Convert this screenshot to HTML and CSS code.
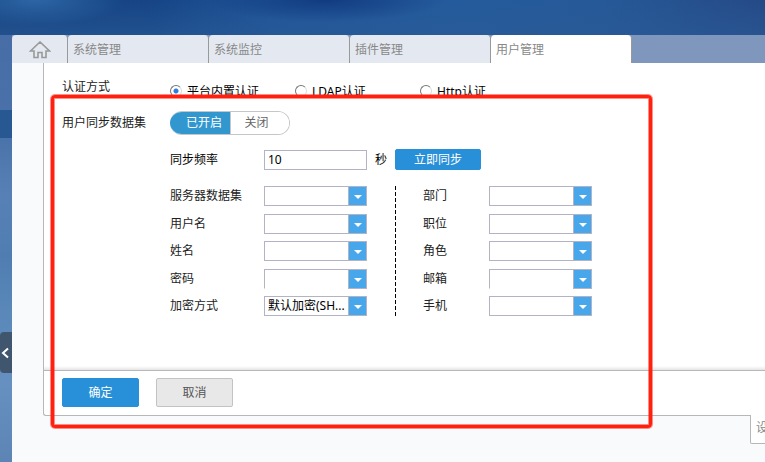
FILE: index.html
```html
<!DOCTYPE html>
<html lang="zh-CN">
<head>
    <meta charset="UTF-8">
    <meta name="viewport" content="width=device-width, initial-scale=1.0">
    <title>用户管理</title>
    <link rel="stylesheet" href="styles.css">
</head>
<body>
    <header class="banner"></header>
    <div class="layout">
        <aside class="sidebar">
            <div class="sidebar-active"></div>
            <button class="collapse" type="button" aria-label="收起">
                <svg width="8" height="12" viewBox="0 0 8 12"><path d="M7 1.5L2 6l5 4.5" fill="none" stroke="#fff" stroke-width="2"/></svg>
            </button>
        </aside>
        <main class="content">
            <nav class="tabs">
                <a href="#" class="tab home" aria-label="首页">
                    <svg width="22" height="18" viewBox="0 0 22 18" fill="none" stroke="#999" stroke-width="1.6"><path d="M1.500 10L11 1l9.500 9H17v6.500h-4V11.500H9v5H5V10z"/></svg>
                </a>
                <a href="#" class="tab">系统管理</a>
                <a href="#" class="tab">系统监控</a>
                <a href="#" class="tab">插件管理</a>
                <a href="#" class="tab active">用户管理</a>
            </nav>
            <form class="panel">
                <div class="panel-body">
                    <div class="row auth">
                        <span class="title">认证方式</span>
                        <div class="radios">
                            <label><input type="radio" name="auth" checked>平台内置认证</label>
                            <label><input type="radio" name="auth">LDAP认证</label>
                            <label><input type="radio" name="auth">Http认证</label>
                        </div>
                    </div>
                    <div class="row sync">
                        <span class="title">用户同步数据集</span>
                        <div class="switch">
                            <button type="button" class="on">已开启</button>
                            <button type="button" class="off">关闭</button>
                        </div>
                    </div>
                    <div class="settings">
                        <div class="frequency">
                            <label class="name" for="freq">同步频率</label>
                            <input class="text" id="freq" type="text" value="10">
                            <span class="unit">秒</span>
                            <button type="button" class="btn primary small">立即同步</button>
                        </div>
                        <div class="fields">
                            <div class="column">
                                <div class="field"><label class="name" for="dataset">服务器数据集</label><span class="combo"><select id="dataset"><option></option></select></span></div>
                                <div class="field"><label class="name" for="username">用户名</label><span class="combo"><select id="username"><option></option></select></span></div>
                                <div class="field"><label class="name" for="realname">姓名</label><span class="combo"><select id="realname"><option></option></select></span></div>
                                <div class="field"><label class="name" for="password">密码</label><span class="combo open"><select id="password"><option></option></select></span></div>
                                <div class="field"><label class="name" for="encrypt">加密方式</label><span class="combo"><select id="encrypt"><option>默认加密(SH...</option></select></span></div>
                            </div>
                            <div class="column right">
                                <div class="field"><label class="name" for="dept">部门</label><span class="combo"><select id="dept"><option></option></select></span></div>
                                <div class="field"><label class="name" for="post">职位</label><span class="combo"><select id="post"><option></option></select></span></div>
                                <div class="field"><label class="name" for="role">角色</label><span class="combo"><select id="role"><option></option></select></span></div>
                                <div class="field"><label class="name" for="mail">邮箱</label><span class="combo open"><select id="mail"><option></option></select></span></div>
                                <div class="field"><label class="name" for="mobile">手机</label><span class="combo"><select id="mobile"><option></option></select></span></div>
                            </div>
                        </div>
                    </div>
                </div>
                <div class="panel-footer">
                    <button type="button" class="btn primary">确定</button>
                    <button type="button" class="btn">取消</button>
                </div>
            </form>
            <div class="bottom"><a href="#" class="corner">设</a></div>
        </main>
    </div>
    <div class="highlight"></div>
</body>
</html>
```
FILE: styles.css
```css
*, *::before {
    box-sizing: border-box;
}
body {
    margin: 0;
    min-height: 100vh;
    display: flex;
    flex-direction: column;
    position: relative;
    overflow: hidden;
    background-color: #f8fafc;
    color: #222;
    font: 12px/16px "Noto Sans", "Noto Sans CJK SC", sans-serif;
}
button, input, select {
    font: inherit;
    margin: 0;
}
a {
    color: #888;
    text-decoration: none;
}
.banner {
    height: 35px;
    background:
        radial-gradient(ellipse 90px 26px at 35px 0, #2d66a5, rgba(45, 102, 165, 0)),
        radial-gradient(ellipse 120px 22px at 325px 0, #123b80, rgba(18, 59, 128, 0)),
        linear-gradient(to bottom, rgba(42, 90, 150, 0), rgba(42, 90, 150, 0.6)),
        linear-gradient(to right, #164382 0, #164485 150px, #1f5598 270px, #245b9c 450px, #265998 600px, #254a86 100%);
}
.layout {
    flex: 1;
    display: flex;
}
.sidebar {
    width: 12px;
    padding-top: 75px;
    background: linear-gradient(#486da6, #4a72aa 100px, #5781b6 160px, #4f7db2 220px, #5b8aba 290px, #6690bf 350px, #5c85b5);
}
.sidebar-active {
    height: 28px;
    background-color: #285892;
}
.collapse {
    display: flex;
    align-items: center;
    width: 12px;
    height: 41px;
    margin-top: 194px;
    padding: 0 0 0 1px;
    border: 0;
    border-radius: 4px 0 0 4px;
    background-color: #40566f;
}
.content {
    flex: 1;
    min-width: 0;
}
.tabs {
    display: flex;
    height: 28px;
    background-color: #7f97bc;
}
.tab {
    width: 141px;
    padding: 7px 5px;
    border-right: 1px solid #999;
    border-radius: 4px 4px 0 0;
    background-color: #e4e9f1;
}
.tab.home {
    width: 56px;
    padding: 6px 17px;
}
.tab.active {
    background-color: #fff;
}
.panel {
    margin-left: 31px;
    border: 1px solid #b7b7b7;
    border-width: 0 0 1px 1px;
    border-radius: 0 0 0 3px;
    background-color: #fff;
}
.panel-body {
    height: 307px;
    padding: 16px 18px 0;
    background: linear-gradient(rgba(0, 0, 0, 0), rgba(0, 0, 0, 0.1)) bottom / 100% 4px no-repeat;
}
.row {
    display: flex;
}
.title {
    width: 108px;
}
.auth {
    height: 19px;
}
.radios {
    display: flex;
    height: 19px;
    padding-top: 5px;
    overflow: hidden;
    color: #000;
}
.radios label {
    display: flex;
    width: 125px;
}
.radios input {
    appearance: none;
    width: 12px;
    height: 12px;
    margin: 1px 5px 0 0;
    border: 1px solid;
    border-color: #777 #ddd #eee #777;
    border-radius: 50%;
}
.radios input:checked {
    background: radial-gradient(#2b7fdc 2px, #fff 3px);
}
.sync {
    align-items: center;
    margin-top: 13px;
}
.switch {
    display: flex;
    width: 120px;
    height: 24px;
    border: 1px solid #c4c6ca;
    border-left: 0;
    border-radius: 12px;
    overflow: hidden;
}
.switch button {
    border: 0;
    padding: 0;
}
.switch .on {
    width: 60px;
    margin: -1px 0;
    padding-left: 8px;
    color: #fff;
    background-color: #3297cf;
}
.switch .off {
    flex: 1;
    padding-right: 7px;
    border-left: 1px solid #c4c6ca;
    color: #666;
    background-color: #fff;
}
.settings {
    margin-left: 108px;
}
.frequency {
    display: flex;
    align-items: center;
    height: 21px;
    margin-top: 14px;
    color: #000;
}
.name {
    width: 94px;
}
.text {
    width: 103px;
    height: 20px;
    padding: 0 3px;
    border: 1px solid #b2b4c6;
}
.unit {
    width: 20px;
    margin-left: 8px;
}
.btn {
    width: 77px;
    height: 29px;
    padding: 0;
    border: 1px solid #c3c3c3;
    border-radius: 2px;
    color: #555;
    background-color: #e8e8e8;
}
.btn.primary {
    border-color: #2890d8;
    color: #fff;
    background-color: #2890d8;
}
.btn.small {
    width: 86px;
    height: 21px;
}
.fields {
    display: flex;
    margin-top: 16px;
}
.column {
    display: flex;
    flex-direction: column;
    justify-content: space-between;
    width: 225px;
    height: 130px;
}
.column.right {
    padding-left: 28px;
    /* thin dashed divider */
    background: repeating-linear-gradient(#000 0 4px, #fff 4px 6px) left / 1px 100% no-repeat;
}
.right .name {
    width: 66px;
}
.field {
    display: flex;
    align-items: center;
    height: 20px;
}
.combo {
    position: relative;
    width: 103px;
    height: 20px;
}
.combo select {
    appearance: none;
    display: block;
    width: 103px;
    height: 20px;
    padding: 0 18px 0 3px;
    border: 1px solid #b2b4c6;
    border-radius: 0;
    color: #000;
    background-color: #fff;
}
.combo.open select {
    border-bottom-color: #fff;
}
.combo::before {
    content: "";
    position: absolute;
    top: 0;
    right: 0;
    width: 19px;
    height: 20px;
    border: 1px solid #b2b4c6;
    background-color: #48a7ea;
    pointer-events: none;
}
.combo::after {
    content: "";
    position: absolute;
    top: 9px;
    right: 5px;
    border: 4px solid transparent;
    border-top-color: #fff;
    border-bottom: 0;
    pointer-events: none;
}
.panel-footer {
    display: flex;
    gap: 17px;
    padding: 7px 18px 8px;
    border-top: 1px solid #b7b7b7;
}
.bottom {
    display: flex;
    justify-content: flex-end;
}
.corner {
    width: 15px;
    height: 29px;
    margin-top: -1px;
    padding: 5px 0 0 5px;
    overflow: hidden;
    border: 1px solid #b7b7b7;
    border-width: 0 0 1px 1px;
    border-radius: 0 0 0 2px;
    background-color: #fff;
}
/* red frame drawn over the sync settings */
.highlight {
    position: absolute;
    left: 51px;
    top: 95px;
    width: 601px;
    height: 333px;
    border: 3px solid #ff2010;
    border-radius: 4px;
    box-shadow: 0 0 0 1px rgba(255, 32, 16, 0.5), inset 0 0 0 1px rgba(255, 32, 16, 0.5);
    pointer-events: none;
}
```
